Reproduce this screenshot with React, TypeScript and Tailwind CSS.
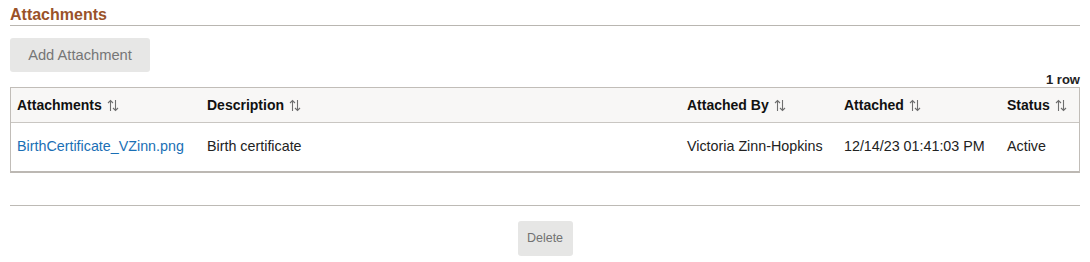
import React from 'react';

const SortIcon = () => (
  <svg width="12" height="13" viewBox="0 0 12 13" className="ml-[5px] inline-block" aria-hidden="true">
    <path d="M3.5 12V1.5M1 4L3.5 1.5L6 4" fill="none" stroke="#6f6f6f" strokeWidth="1.1" />
    <path d="M8.5 1V11.5M6 9L8.5 11.5L11 9" fill="none" stroke="#6f6f6f" strokeWidth="1.1" />
  </svg>
);

const columns = [
  { label: 'Attachments', width: 'w-[196px]' },
  { label: 'Description', width: 'w-[480px]' },
  { label: 'Attached By', width: 'w-[157px]' },
  { label: 'Attached', width: 'w-[163px]' },
  { label: 'Status', width: 'flex-1' },
];

export default function App() {
  return (
    <div className="w-[1090px] h-[262px] bg-white px-[10px] font-['Liberation_Sans',Arial,sans-serif]">
      {/* Section title */}
      <div className="pt-[5px] border-b border-[#b9b6b1] h-[26px]">
        <h2 className="text-[16px] font-bold text-[#9a5229] leading-[20px]">Attachments</h2>
      </div>

      <button className="mt-[12px] h-[34px] w-[140px] rounded-[3px] bg-[#e7e7e6] text-[14.7px] text-[#767676]">
        Add Attachment
      </button>

      <div className="flex justify-end h-[14px] mt-[1px] text-[13px] font-bold text-[#222] leading-[14px]">1 row</div>

      {/* Grid */}
      <div className="border border-[#c1bdb8] border-b-2 border-b-[#bcb8b3]">
        <div className="flex h-[35px] items-center bg-[#f8f7f6] border-b border-[#c9c6c2] text-[14px] font-bold text-[#111]">
          {columns.map((c, i) => (
            <div key={c.label} className={`${c.width} flex items-center ${i === 0 ? 'pl-[6px]' : ''}`}>
              {c.label}
              <SortIcon />
            </div>
          ))}
        </div>
        <div className="flex h-[48px] items-center text-[14.3px] text-[#222]">
          <div className="w-[196px] pl-[6px] text-[#1a6fb5]">BirthCertificate_VZinn.png</div>
          <div className="w-[480px]">Birth certificate</div>
          <div className="w-[157px]">Victoria Zinn-Hopkins</div>
          <div className="w-[163px]">12/14/23 01:41:03 PM</div>
          <div className="flex-1">Active</div>
        </div>
      </div>

      <div className="mt-[32px] border-t border-[#bdbab5]" />

      <div className="flex justify-center mt-[15px]">
        <button className="h-[35px] w-[55px] rounded-[3px] bg-[#e6e6e5] text-[12.5px] text-[#727272]">
          Delete
        </button>
      </div>
    </div>
  );
}
